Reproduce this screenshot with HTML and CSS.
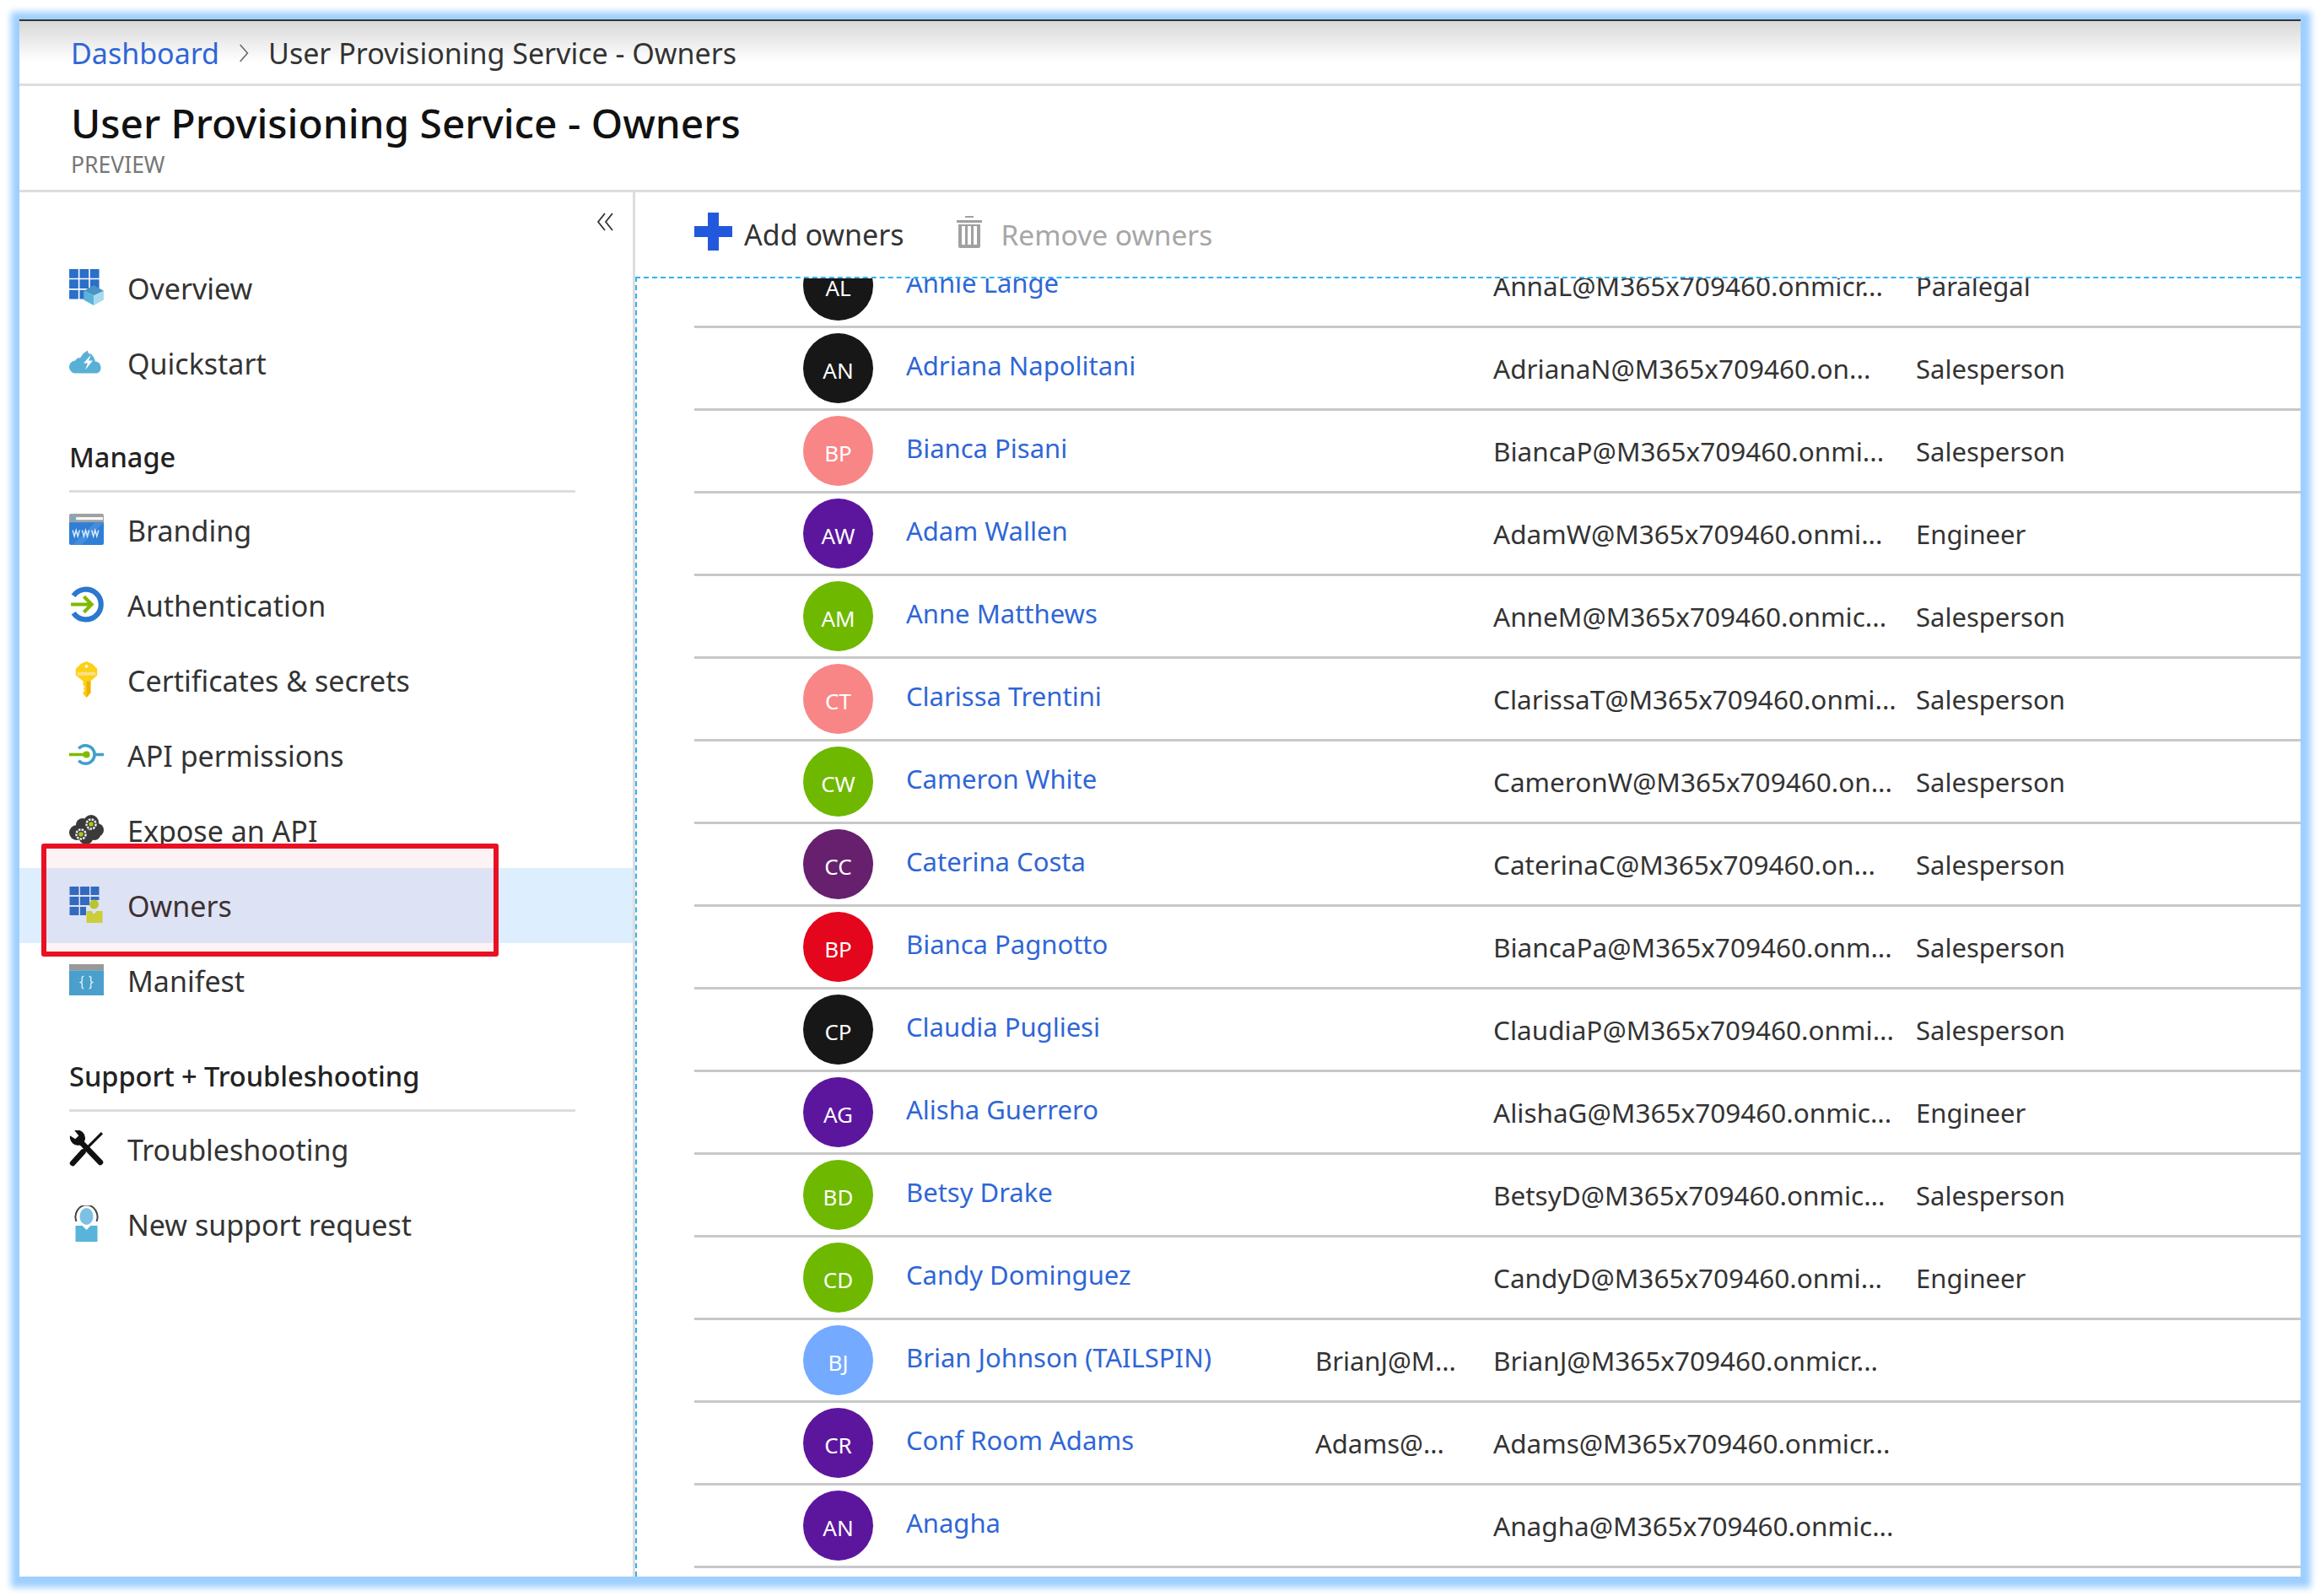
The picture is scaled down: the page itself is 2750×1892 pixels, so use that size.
FILE: index.html
```html
<!DOCTYPE html>
<html lang="en">
<head>
    <meta charset="UTF-8">
    <title>User Provisioning Service - Owners</title>
    <link rel="stylesheet" href="styles.css">
</head>
<body>
    <div class="window">
        <nav class="breadcrumb">
            <a href="#">Dashboard</a>
            <svg class="crumb-sep" viewBox="0 0 12 20"><path d="M2 1l8 9-8 9" fill="none" stroke="#666" stroke-width="1.4"/></svg>
            <span>User Provisioning Service - Owners</span>
        </nav>
        <header class="title-bar">
            <h1>User Provisioning Service - Owners</h1>
            <div class="preview">PREVIEW</div>
        </header>
        <div class="main">
            <aside class="sidebar">
                <div class="collapse">
                    <svg viewBox="0 0 23 22"><path d="M11 1L3 11l8 10M20 1l-8 10 8 10" fill="none" stroke="#333" stroke-width="1.8"/></svg>
                </div>
                <a class="nav-item" href="#">
                    <svg class="nav-icon" viewBox="0 0 38 40">
                        <path fill="#2a6fc9" d="M0 0h10v10H0zM11.500 0h10v10h-10zM23 0h10v10H23zM0 11.500h10v10H0zM11.500 11.500h10v10h-10zM23 11.500h10v10H23zM0 23h10v10H0zM11.500 23h6v10h-6z"/>
                        <path fill="#a9dbf0" d="M27 29l11-5v10l-11 6z"/>
                        <path fill="#59b4d9" d="M16 24v10l11 6V29z"/>
                        <path fill="#4a94c4" d="M16 24l11-6 11 6-11 5z"/>
                    </svg>
                    Overview
                </a>
                <a class="nav-item" href="#">
                    <svg class="nav-icon" viewBox="0 0 41 28">
                        <path fill="#59b0d6" d="M8 27a7.500 7.500 0 0 1-1-15C9 9 11 8 13 9 15 5 18 2 22 0c0 3 1 4 4 4 2 2 4 5 5 9a7.300 7.300 0 0 1 2 14z"/>
                        <path fill="#fff" d="M26 5l-9 10h5l-3 8 9-11h-5z"/>
                    </svg>
                    Quickstart
                </a>
                <h2 class="nav-heading">Manage</h2>
                <a class="nav-item" href="#">
                    <svg class="nav-icon" viewBox="0 0 40 36">
                        <path fill="#a0a1a2" d="M0 2a2 2 0 0 1 2-2h36a2 2 0 0 1 2 2v10H0z"/>
                        <path fill="#fff" d="M8 4h31v3H8z"/>
                        <circle cx="5" cy="5.500" r="2.500" fill="#59b4d9"/>
                        <path fill="#2f7fd6" d="M0 10h40v24a2 2 0 0 1-2 2H2a2 2 0 0 1-2-2z"/>
                        <path fill="#5a9ce0" d="M4 36l26-26h10L14 36z" opacity=".5"/>
                        <path fill="none" stroke="#d8e8f8" stroke-width="1.500" d="M4 19l2 7 2-7 2 7 2-7M15 19l2 7 2-7 2 7 2-7M26 19l2 7 2-7 2 7 2-7"/>
                    </svg>
                    Branding
                </a>
                <a class="nav-item" href="#">
                    <svg class="nav-icon" viewBox="0 0 40 42">
                        <path fill="none" stroke="#2a78d0" stroke-width="6" d="M5 11a17.500 17.500 0 1 1 0 20"/>
                        <path fill="none" stroke="#7fba00" stroke-width="4" d="M2 21h24M17 12l9 9-9 9"/>
                    </svg>
                    Authentication
                </a>
                <a class="nav-item" href="#">
                    <svg class="nav-icon" viewBox="0 0 40 44">
                        <path fill="#fcd116" d="M20 0l7 3 6 6v8l-8 7v14l-5 6-4-4v-3l2-2-2-2 2-2-2-2V24l-9-7V9l6-6z"/>
                        <circle cx="20" cy="6" r="2" fill="#fff"/>
                        <path fill="#fee08a" d="M9 13h22v4H9z"/>
                        <path fill="#eeb100" d="M20 24h5v14l-5 6z"/>
                    </svg>
                    Certificates &amp; secrets
                </a>
                <a class="nav-item" href="#">
                    <svg class="nav-icon" viewBox="0 0 40 26">
                        <path fill="none" stroke="#3ea0cc" stroke-width="3.500" d="M11 6a10.500 10.500 0 1 1 0 14M28 13h12"/>
                        <path fill="none" stroke="#7fba00" stroke-width="3.500" d="M0 13h20"/>
                        <circle cx="20" cy="13" r="4" fill="#7fba00"/>
                    </svg>
                    API permissions
                </a>
                <a class="nav-item" href="#">
                    <svg class="nav-icon" viewBox="0 0 41 35">
                        <g fill="#3a3a3a">
                            <circle cx="9" cy="21" r="9"/><circle cx="16" cy="12" r="8"/><circle cx="26" cy="9" r="9"/>
                            <circle cx="33" cy="18" r="8"/><circle cx="20" cy="26" r="9"/><circle cx="30" cy="23" r="7"/>
                        </g>
                        <circle cx="26" cy="11" r="5.500" fill="#3a3a3a" stroke="#eee" stroke-width="2.500" stroke-dasharray="2.500 1.200"/>
                        <circle cx="26" cy="11" r="2.800" fill="#a9c91a"/>
                        <circle cx="14" cy="23" r="5.500" fill="#3a3a3a" stroke="#eee" stroke-width="2.500" stroke-dasharray="2.500 1.200"/>
                        <circle cx="14" cy="23" r="2.800" fill="#a9c91a"/>
                    </svg>
                    Expose an API
                </a>
                <a class="nav-item selected" href="#">
                    <svg class="nav-icon" viewBox="0 0 40 43">
                        <path fill="#2a6fc9" d="M0 0h11v10H0zM12.500 0h11v10h-11zM25 0h10v10H25zM0 12h11v10H0zM12.500 12h11v10h-11zM25 12h10v4H25zM0 24h11v10H0zM12.500 24h7v10h-7z"/>
                        <circle cx="29" cy="21" r="5.500" fill="#b6cf2e"/>
                        <path fill="#c8d83a" d="M20 43V29h6l3 4 3-4h7v14z"/>
                    </svg>
                    Owners
                </a>
                <a class="nav-item" href="#">
                    <svg class="nav-icon" viewBox="0 0 40 36">
                        <path fill="#999" d="M0 0h40v7H0z"/>
                        <path fill="#4a9fcc" d="M0 7h40v29H0z"/>
                        <path fill="none" stroke="#d8ecf6" stroke-width="1.500" d="M17 14c-3 0-2 2-2 4s0 2-2 3c2 1 2 1 2 3s-1 4 2 4M23 14c3 0 2 2 2 4s0 2 2 3c-2 1-2 1-2 3s1 4-2 4"/>
                    </svg>
                    Manifest
                </a>
                <h2 class="nav-heading support">Support + Troubleshooting</h2>
                <a class="nav-item" href="#">
                    <svg class="nav-icon" viewBox="0 0 40 42">
                        <path fill="none" stroke="#111" stroke-width="6.500" stroke-linecap="round" d="M12 12l24 25"/>
                        <path fill="#111" d="M1 6a9.500 9.500 0 0 0 12 11l5-5A9.500 9.500 0 0 0 6 0l5 6-4 4z"/>
                        <path fill="none" stroke="#111" stroke-width="6.500" stroke-linecap="round" d="M4 38l12-13"/>
                        <path fill="none" stroke="#111" stroke-width="3" d="M16 25L38 3"/>
                    </svg>
                    Troubleshooting
                </a>
                <a class="nav-item" href="#">
                    <svg class="nav-icon" viewBox="0 0 40 43">
                        <path fill="#59b4d9" d="M7 24h8l5 5 5-5h8v19H7z"/>
                        <ellipse cx="20" cy="13" rx="8" ry="10" fill="#7cc0e4"/>
                        <path fill="none" stroke="#444" stroke-width="2" d="M8 19A13 14 0 1 1 32 19"/>
                    </svg>
                    New support request
                </a>
            </aside>
            <section class="content">
                <div class="toolbar">
                    <button class="tool-btn">
                        <svg class="plus" viewBox="0 0 45 45"><path fill="#2258dc" d="M16 0h13v16h16v13H29v16H16V29H0V16h16z"/></svg>
                        Add owners
                    </button>
                    <button class="tool-btn disabled">
                        <svg class="trash" viewBox="0 0 30 38">
                            <path fill="#a0a0a0" d="M10 0h10v2H10zM0 5h30v3H0zM2 10h26v26a2 2 0 0 1-2 2H4a2 2 0 0 1-2-2z"/>
                            <path fill="#fff" d="M6 12h4v22H6zM13 12h4v22h-4zM20 12h4v22h-4z"/>
                        </svg>
                        Remove owners
                    </button>
                </div>
                <div class="list">
                    <div class="rows">
                        <div class="row"><div class="avatar black">AL</div><a class="name" href="#">Annie Lange</a><div class="alias"></div><div class="email">AnnaL@M365x709460.onmicr...</div><div class="job">Paralegal</div></div>
                        <div class="row"><div class="avatar black">AN</div><a class="name" href="#">Adriana Napolitani</a><div class="alias"></div><div class="email">AdrianaN@M365x709460.on...</div><div class="job">Salesperson</div></div>
                        <div class="row"><div class="avatar salmon">BP</div><a class="name" href="#">Bianca Pisani</a><div class="alias"></div><div class="email">BiancaP@M365x709460.onmi...</div><div class="job">Salesperson</div></div>
                        <div class="row"><div class="avatar purple">AW</div><a class="name" href="#">Adam Wallen</a><div class="alias"></div><div class="email">AdamW@M365x709460.onmi...</div><div class="job">Engineer</div></div>
                        <div class="row"><div class="avatar green">AM</div><a class="name" href="#">Anne Matthews</a><div class="alias"></div><div class="email">AnneM@M365x709460.onmic...</div><div class="job">Salesperson</div></div>
                        <div class="row"><div class="avatar salmon">CT</div><a class="name" href="#">Clarissa Trentini</a><div class="alias"></div><div class="email">ClarissaT@M365x709460.onmi...</div><div class="job">Salesperson</div></div>
                        <div class="row"><div class="avatar green">CW</div><a class="name" href="#">Cameron White</a><div class="alias"></div><div class="email">CameronW@M365x709460.on...</div><div class="job">Salesperson</div></div>
                        <div class="row"><div class="avatar plum">CC</div><a class="name" href="#">Caterina Costa</a><div class="alias"></div><div class="email">CaterinaC@M365x709460.on...</div><div class="job">Salesperson</div></div>
                        <div class="row"><div class="avatar red">BP</div><a class="name" href="#">Bianca Pagnotto</a><div class="alias"></div><div class="email">BiancaPa@M365x709460.onm...</div><div class="job">Salesperson</div></div>
                        <div class="row"><div class="avatar black">CP</div><a class="name" href="#">Claudia Pugliesi</a><div class="alias"></div><div class="email">ClaudiaP@M365x709460.onmi...</div><div class="job">Salesperson</div></div>
                        <div class="row"><div class="avatar purple">AG</div><a class="name" href="#">Alisha Guerrero</a><div class="alias"></div><div class="email">AlishaG@M365x709460.onmic...</div><div class="job">Engineer</div></div>
                        <div class="row"><div class="avatar green">BD</div><a class="name" href="#">Betsy Drake</a><div class="alias"></div><div class="email">BetsyD@M365x709460.onmic...</div><div class="job">Salesperson</div></div>
                        <div class="row"><div class="avatar green">CD</div><a class="name" href="#">Candy Dominguez</a><div class="alias"></div><div class="email">CandyD@M365x709460.onmi...</div><div class="job">Engineer</div></div>
                        <div class="row"><div class="avatar sky">BJ</div><a class="name" href="#">Brian Johnson (TAILSPIN)</a><div class="alias">BrianJ@M...</div><div class="email">BrianJ@M365x709460.onmicr...</div><div class="job"></div></div>
                        <div class="row"><div class="avatar purple">CR</div><a class="name" href="#">Conf Room Adams</a><div class="alias">Adams@...</div><div class="email">Adams@M365x709460.onmicr...</div><div class="job"></div></div>
                        <div class="row"><div class="avatar purple">AN</div><a class="name" href="#">Anagha</a><div class="alias"></div><div class="email">Anagha@M365x709460.onmic...</div><div class="job"></div></div>
                    </div>
                </div>
            </section>
        </div>
        <div class="callout"></div>
    </div>
</body>
</html>
```

FILE: styles.css
```css
* {
    box-sizing: border-box;
}
html, body {
    height: 100%;
}
body {
    margin: 0;
    padding: 23px;
    background-color: #fff;
    font-family: "Noto Sans", "Open Sans", sans-serif;
    color: #333;
    overflow: hidden;
}
a {
    text-decoration: none;
}
.window {
    position: relative;
    height: 1846px;
    display: flex;
    flex-direction: column;
    background-color: #fff;
    border-top: 2px solid #333;
    box-shadow: 1px 2px 8px 11px #9dcfff;
}
.breadcrumb {
    height: 77px;
    padding: 2px 61px 0;
    display: flex;
    align-items: center;
    gap: 22px;
    font-size: 34px;
    background: linear-gradient(#d8d8d8, #ffffff 65%);
    border-bottom: 3px solid #ddd;
}
.breadcrumb a {
    color: #2f66d6;
}
.crumb-sep {
    width: 14px;
    height: 22px;
}
.title-bar {
    height: 126px;
    padding: 12px 61px 0;
    border-bottom: 3px solid #ddd;
}
.title-bar h1 {
    margin: 0;
    font-size: 47.8px;
    font-weight: 500;
    line-height: 63px;
    color: #111;
}
.preview {
    font-size: 26.5px;
    line-height: 36px;
    color: #777;
}
.main {
    flex: 1;
    display: flex;
    min-height: 0;
}
.sidebar {
    width: 730px;
    flex-shrink: 0;
    border-right: 3px solid #ddd;
    padding-top: 24px;
}
.collapse {
    height: 45px;
    padding-right: 21px;
    display: flex;
    justify-content: flex-end;
}
.collapse svg {
    width: 23px;
    height: 22px;
}
.nav-item {
    height: 89px;
    padding-left: 59px;
    display: flex;
    align-items: center;
    gap: 28px;
    font-size: 34px;
    color: #333;
}
.nav-item.selected {
    background-color: #ddeeff;
}
.nav-icon {
    width: 41px;
    height: 43px;
    margin-bottom: 3px;
    flex-shrink: 0;
}
.nav-heading {
    margin: 23px 68px 0 59px;
    height: 86px;
    padding-top: 22px;
    font-size: 32.5px;
    font-weight: 500;
    line-height: 44px;
    color: #222;
    border-bottom: 3px solid #ddd;
}
.nav-heading.support {
    margin-top: 25px;
}
.content {
    flex: 1;
    min-width: 0;
    display: flex;
    flex-direction: column;
}
.toolbar {
    height: 100px;
    padding-left: 70px;
    display: flex;
    align-items: center;
    gap: 62px;
}
.tool-btn {
    display: flex;
    align-items: center;
    gap: 14px;
    padding: 0;
    border: none;
    background: none;
    font-family: inherit;
    font-size: 34px;
    color: #333;
}
.tool-btn.disabled {
    font-size: 33.5px;
    color: #a6a6a6;
}
.plus {
    width: 45px;
    height: 45px;
    margin-bottom: 7px;
}
.trash {
    width: 30px;
    height: 38px;
    margin-right: 9px;
    margin-bottom: 7px;
}
.list {
    flex: 1;
    min-height: 0;
    overflow: hidden;
    border-top: 2px dashed #30b4ee;
    border-left: 2px dashed #30b4ee;
    padding-left: 68px;
}
.rows {
    margin-top: -39px;
}
.row {
    height: 98px;
    display: flex;
    align-items: center;
    border-bottom: 3px solid #c8c8c8;
    font-size: 31px;
}
.avatar {
    width: 83px;
    height: 83px;
    margin-left: 129px;
    border-radius: 50%;
    display: flex;
    align-items: center;
    justify-content: center;
    color: #fff;
    font-size: 26px;
    flex-shrink: 0;
    padding-top: 4px;
}
.black { background-color: #171717; }
.salmon { background-color: #f88686; }
.purple { background-color: #5c169e; }
.green { background-color: #6fb800; }
.plum { background-color: #66206e; }
.red { background-color: #e3061c; }
.sky { background-color: #74aaff; }
.name {
    width: 485px;
    margin-left: 39px;
    color: #2f66d6;
    padding-bottom: 8px;
    flex-shrink: 0;
}
.alias {
    width: 211px;
    flex-shrink: 0;
}
.email {
    width: 501px;
    flex-shrink: 0;
    font-size: 31.5px;
    white-space: nowrap;
}
.job {
    flex: 1;
}
.callout {
    position: absolute;
    left: 26px;
    top: 975px;
    width: 542px;
    height: 134px;
    border: 6px solid #e81123;
    border-radius: 3px;
    background-color: rgba(232, 17, 35, 0.05);
}
```
